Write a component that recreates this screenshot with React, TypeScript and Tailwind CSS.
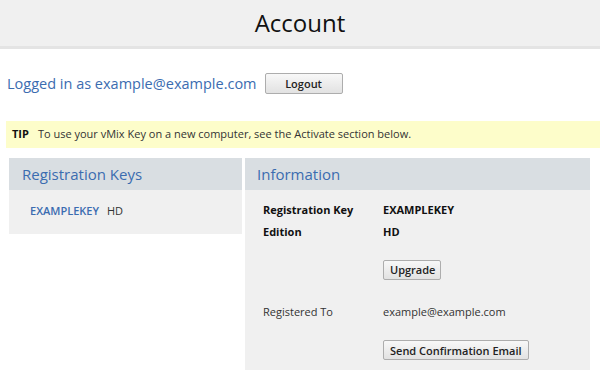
import React from 'react';

const btn =
  'h-[20px] px-[6px] border border-[#adadad] rounded-[2px] bg-gradient-to-b from-[#f8f8f8] to-[#e2e2e2] text-[11px] font-semibold text-[#222] leading-none';

export default function App() {
  return (
    <div className="w-[600px] h-[370px] overflow-hidden bg-white text-[#333]" style={{ fontFamily: '"Open Sans", "Liberation Sans", sans-serif' }}>
      {/* page title */}
      <div className="h-[49px] bg-[#f0f0f0] border-b-[3px] border-[#e4e4e4] flex items-center justify-center">
        <h1 className="text-[24px] text-[#111]">Account</h1>
      </div>

      {/* login row */}
      <div className="flex items-center gap-[8px] pl-[7px] pt-[24px]">
        <span className="text-[14.5px] text-[#3b6cb0]">Logged in as example@example.com</span>
        <button className={`${btn} h-[21px] w-[78px] font-bold`}>Logout</button>
      </div>

      {/* tip */}
      <div className="mt-[26px] ml-[6px] h-[27px] bg-[#fdfdca] flex items-center pl-[6px] text-[11px]">
        <span className="font-bold text-[#111] mr-[9px]">TIP</span>
        <span className="text-[#333]">To use your vMix Key on a new computer, see the Activate section below.</span>
      </div>

      {/* panels */}
      <div className="flex items-start gap-[3px] px-[9px] mt-[10px]">
        <div className="w-[233px]">
          <div className="h-[32px] bg-[#d9dee2] flex items-center pl-[13px] text-[15px] text-[#3b6cb0]">Registration Keys</div>
          <div className="h-[44px] bg-[#f0f0f0] flex items-center pl-[21px] pb-[1px] text-[11px]">
            <span className="text-[#3b6cb0] font-semibold">EXAMPLEKEY</span>
            <span className="ml-[8px] text-[#333]">HD</span>
          </div>
        </div>

        <div className="w-[345px]">
          <div className="h-[32px] bg-[#d9dee2] flex items-center pl-[12px] text-[15px] text-[#3b6cb0]">Information</div>
          <div className="bg-[#f0f0f0] h-[200px] pl-[18px] pt-[12px] text-[11px]">
            <div className="grid grid-cols-[120px_1fr] gap-y-[6px] font-bold text-[#111]">
              <span>Registration Key</span>
              <span>EXAMPLEKEY</span>
              <span>Edition</span>
              <span>HD</span>
            </div>
            <div className="pl-[120px] mt-[19px]">
              <button className={`${btn} w-[58px]`}>Upgrade</button>
            </div>
            <div className="grid grid-cols-[120px_1fr] mt-[24px] text-[#333]">
              <span>Registered To</span>
              <span>example@example.com</span>
            </div>
            <div className="pl-[120px] mt-[20px]">
              <button className={btn}>Send Confirmation Email</button>
            </div>
          </div>
        </div>
      </div>
    </div>
  );
}
